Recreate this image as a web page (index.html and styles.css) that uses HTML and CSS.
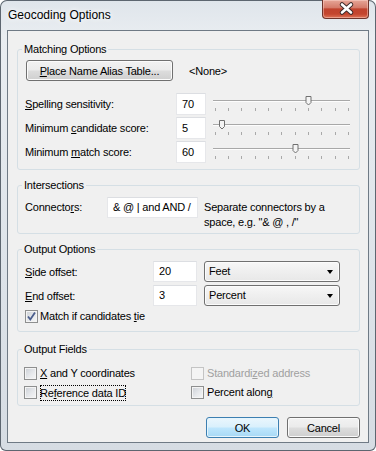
FILE: index.html
```html
<!DOCTYPE html>
<html lang="en">

<head>
  <meta charset="UTF-8" />
  <title>Geocoding Options</title>
  <link rel="stylesheet" href="styles.css">
</head>

<body>
  <div class="window">
    <div class="titlebar">
      <span class="title">Geocoding Options</span>
      <div class="close">
        <svg width="47" height="19" viewBox="0 0 47 19">
          <path d="M20 5.5l9 8M29 5.5l-9 8" stroke="#3b2a2a" stroke-width="4.5" stroke-linecap="round" />
          <path d="M20 5.5l9 8M29 5.5l-9 8" stroke="#fff" stroke-width="2.6" stroke-linecap="round" />
        </svg>
      </div>
    </div>

    <div class="client">
      <fieldset class="group matching">
        <legend>Matching Options</legend>
        <div class="alias-row">
          <button class="btn alias"><u>P</u>lace Name Alias Table...</button>
          <span>&lt;None&gt;</span>
        </div>
        <div class="score-grid">
          <label><u>S</u>pelling sensitivity:</label>
          <div class="edit">70</div>
          <svg class="slider" width="137" height="22" viewBox="0 0 137 22">
            <path d="M0 7.5h137" stroke="#a8a8a8" />
            <path d="M0 8.5h137" stroke="#fdfdfd" />
            <path d="M2.5 15v3M15.5 15v3M28.5 15v3M42.5 15v3M55.5 15v3M68.5 15v3M82.5 15v3M95.5 15v3M108.5 15v3M122.5 15v3M135.5 15v3" stroke="#a9a9a9" />
            <path d="M93 3.5h5v6l-2.5 2.5l-2.5-2.5z" fill="#f4f4f4" stroke="#707070" />
          </svg>

          <label>Minimum <u>c</u>andidate score:</label>
          <div class="edit">5</div>
          <svg class="slider" width="137" height="22" viewBox="0 0 137 22">
            <path d="M0 7.5h137" stroke="#a8a8a8" />
            <path d="M0 8.5h137" stroke="#fdfdfd" />
            <path d="M2.5 15v3M15.5 15v3M28.5 15v3M42.5 15v3M55.5 15v3M68.5 15v3M82.5 15v3M95.5 15v3M108.5 15v3M122.5 15v3M135.5 15v3" stroke="#a9a9a9" />
            <path d="M6.5 3.5h5v6l-2.5 2.5l-2.5-2.5z" fill="#f4f4f4" stroke="#707070" />
          </svg>

          <label>Minimum <u>m</u>atch score:</label>
          <div class="edit">60</div>
          <svg class="slider" width="137" height="22" viewBox="0 0 137 22">
            <path d="M0 7.5h137" stroke="#a8a8a8" />
            <path d="M0 8.5h137" stroke="#fdfdfd" />
            <path d="M2.5 15v3M15.5 15v3M28.5 15v3M42.5 15v3M55.5 15v3M68.5 15v3M82.5 15v3M95.5 15v3M108.5 15v3M122.5 15v3M135.5 15v3" stroke="#a9a9a9" />
            <path d="M80 3.5h5v6l-2.5 2.5l-2.5-2.5z" fill="#f4f4f4" stroke="#707070" />
          </svg>
        </div>
      </fieldset>

      <fieldset class="group intersections">
        <legend>Intersections</legend>
        <div class="connector-row">
          <label class="connector-label">Connecto<u>r</u>s:</label>
          <div class="edit connectors">&amp; @ | and AND /</div>
          <p class="hint">Separate connectors by a<br>space, e.g. "&amp; @ , /"</p>
        </div>
      </fieldset>

      <fieldset class="group output">
        <legend>Output Options</legend>
        <div class="offset-row">
          <label class="offset-label"><u>S</u>ide offset:</label>
          <div class="edit offset">20</div>
          <div class="combo">Feet<span class="arrow"></span></div>
        </div>
        <div class="offset-row">
          <label class="offset-label"><u>E</u>nd offset:</label>
          <div class="edit offset">3</div>
          <div class="combo">Percent<span class="arrow"></span></div>
        </div>
        <div class="check-row tie">
          <span class="check checked">
            <svg width="11" height="11" viewBox="0 0 11 11">
              <path d="M2 5.5l2.3 3l4.7-7" fill="none" stroke="#4a5d8c" stroke-width="1.8" />
            </svg>
          </span>
          <span>Match if candidates <u>t</u>ie</span>
        </div>
      </fieldset>

      <fieldset class="group fields">
        <legend>Output Fields</legend>
        <div class="fields-grid">
          <div class="check-row"><span class="check"></span><span><u>X</u> and Y coordinates</span></div>
          <div class="check-row disabled"><span class="check"></span><span>Standardi<u>z</u>ed address</span></div>
          <div class="check-row"><span class="check"></span><span class="focus">Re<u>f</u>erence data ID</span></div>
          <div class="check-row"><span class="check"></span><span>Percent alon<u>g</u></span></div>
        </div>
      </fieldset>

      <div class="actions">
        <button class="btn default">OK</button>
        <button class="btn">Cancel</button>
      </div>
    </div>
  </div>
</body>

</html>
```
FILE: styles.css
```css
* {
  box-sizing: border-box;
}

body {
  margin: 0;
  font-family: "Liberation Sans", Arial, sans-serif;
  font-size: 11px;
  letter-spacing: -0.2px;
  color: #000;
}

/* window frame */
.window {
  width: 376px;
  height: 451px;
  display: flex;
  flex-direction: column;
  border-radius: 7px 7px 6px 6px;
  background: linear-gradient(180deg, #dfe5eb 0%, #e9edf1 8%, #dde3e9 60%, #d6dce3 100%);
  box-shadow: inset 0 0 0 1px #5d6670;
}

.titlebar {
  height: 30px;
  flex: none;
  display: flex;
  justify-content: space-between;
  align-items: flex-start;
  padding: 0 7px 0 8px;
}

.title {
  margin-top: 8px;
  font-size: 12px;
  line-height: 14px;
  letter-spacing: 0;
  text-shadow: 0 0 8px #fff, 0 0 4px #fff;
}

.close {
  width: 47px;
  height: 19px;
  border: 1px solid #6e342b;
  border-top: none;
  border-radius: 0 0 4px 4px;
  background: linear-gradient(180deg, #e6a698 0%, #d57c6b 42%, #c0432e 50%, #c4462f 78%, #de7458 100%);
  box-shadow: inset 0 0 0 1px rgba(255, 220, 210, 0.45);
}

.close svg {
  display: block;
  margin: -1px 0 0 -1px;
}

.client {
  flex: 1;
  margin: 0 7px 8px;
  padding: 11px 8px 4px 9px;
  border: 1px solid #6f7a85;
  background-color: #f0f0f0;
  display: flex;
  flex-direction: column;
}

/* group boxes */
.group {
  margin: 0;
  min-width: 0;
  border: 1px solid #d5dfe5;
  border-radius: 3px;
}

.group legend {
  padding: 0 2px;
  margin-left: -3px;
  line-height: 14px;
}

.matching {
  padding: 4px 8px 6px 7px;
}

.intersections {
  margin-top: 8px;
  padding: 5px 8px 3px 7px;
}

.output {
  margin-top: 8px;
  padding: 5px 8px 7px 7px;
}

.fields {
  margin-top: 10px;
  padding: 8px 8px 3px 7px;
}

/* buttons */
.btn {
  height: 21px;
  padding: 0;
  font-family: inherit;
  font-size: 11px;
  letter-spacing: -0.2px;
  color: #000;
  border: 1px solid #707070;
  border-radius: 3px;
  background: linear-gradient(180deg, #f2f2f2 0%, #ebebeb 48%, #dddddd 52%, #cfcfcf 100%);
  box-shadow: inset 0 0 0 1px #fbfbfb;
}

.btn.default {
  border-color: #3c7fb1;
  background: linear-gradient(180deg, #eaf6fd 0%, #d9f0fc 48%, #bee6fd 52%, #a7d9f5 100%);
  box-shadow: inset 0 0 0 1px #e6f5fd;
}

.alias-row {
  display: flex;
  align-items: center;
  gap: 16px;
  margin-bottom: 12px;
}

.alias {
  width: 147px;
  margin-left: 1px;
}

/* edit boxes */
.edit {
  height: 22px;
  padding-left: 5px;
  line-height: 20px;
  background-color: #fff;
  border: 1px solid #e6e7ea;
  border-top-color: #dcdee2;
  white-space: nowrap;
}

.score-grid {
  display: grid;
  grid-template-columns: 144px 30px 137px;
  grid-auto-rows: 22px;
  column-gap: 7px;
  row-gap: 2px;
}

.score-grid label {
  line-height: 22px;
  white-space: nowrap;
}

.slider {
  display: block;
}

.connector-row {
  display: flex;
  align-items: flex-start;
}

.connector-label {
  width: 82px;
  line-height: 21px;
}

.connectors {
  width: 91px;
  height: 21px;
  line-height: 19px;
}

.hint {
  margin: 3px 0 0 6px;
  line-height: 15px;
  white-space: nowrap;
}

.offset-row {
  display: flex;
  align-items: center;
  height: 21px;
}

.offset-row + .offset-row {
  margin-top: 3px;
}

.offset-label {
  width: 128px;
}

.offset {
  width: 44px;
  height: 21px;
  line-height: 19px;
}

.combo {
  width: 136px;
  height: 21px;
  margin-left: 7px;
  padding: 0 6px 0 4px;
  display: flex;
  align-items: center;
  justify-content: space-between;
  line-height: 19px;
  border: 1px solid #707070;
  border-radius: 3px;
  background: linear-gradient(180deg, #f7f7f7 0%, #efefef 50%, #e8e8e8 100%);
  box-shadow: inset 0 0 0 1px #fcfcfc;
}

.arrow {
  width: 0;
  height: 0;
  border-left: 3.5px solid transparent;
  border-right: 3.5px solid transparent;
  border-top: 4px solid #000;
  margin-top: 1px;
}

/* checkboxes */
.check-row {
  display: flex;
  align-items: center;
  gap: 3px;
  line-height: 19px;
  white-space: nowrap;
}

.check {
  width: 13px;
  height: 13px;
  flex: none;
  border: 1px solid #8e8f8f;
  background: linear-gradient(135deg, #cbcfd5 0%, #e6e8eb 55%, #f7f7f7 100%);
  box-shadow: inset 0 0 0 1px #f4f4f4;
  display: flex;
  align-items: center;
  justify-content: center;
}

.check svg {
  display: block;
}

.tie {
  margin: 3px 0 0 0;
  line-height: 15px;
  gap: 2px;
}

.disabled {
  color: #a0a0a0;
}

.disabled .check {
  border-color: #c4c4c4;
  background: #f4f4f4;
}

.fields-grid {
  display: grid;
  grid-template-columns: 167px 1fr;
  margin-left: -1px;
}

.focus {
  outline: 1px dotted #000;
  outline-offset: -1px;
  line-height: 16px;
}

.actions {
  margin-top: 11px;
  display: flex;
  justify-content: flex-end;
  gap: 8px;
}

.actions .btn {
  width: 73px;
}
```
